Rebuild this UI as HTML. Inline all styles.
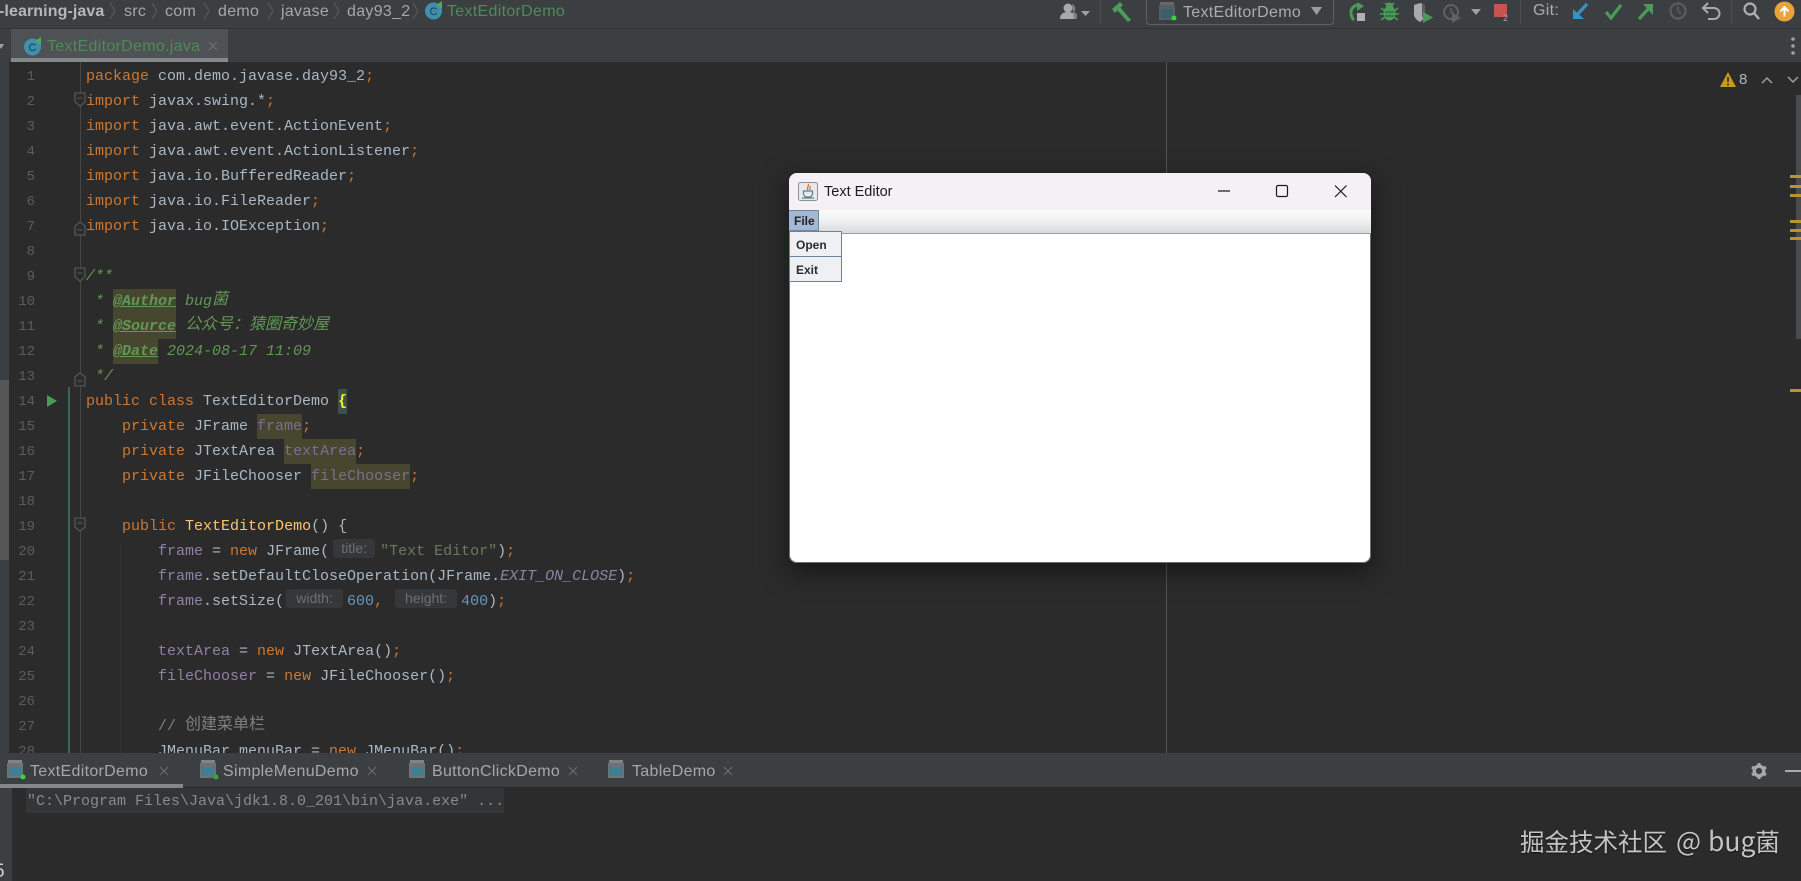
<!DOCTYPE html>
<html lang="en">
<head>
<meta charset="utf-8">
<title>TextEditorDemo</title>
<style>
html,body{margin:0;padding:0;background:#2b2b2b}
#root{position:relative;width:1801px;height:881px;overflow:hidden;background:#2b2b2b;font-family:"Liberation Sans","Noto Sans CJK SC",sans-serif;filter:blur(.35px)}
.a{position:absolute}
.t{position:absolute;white-space:pre;font-size:16px;letter-spacing:.3px;line-height:22px;color:#a4a8aa}
.gr{color:#4f8a5a}
svg{position:absolute;overflow:visible}
#code{position:absolute;left:86px;top:64px;font-family:"Liberation Mono","Noto Sans CJK SC",monospace;font-size:15px;color:#a9b7c6}
.l{height:25px;line-height:25px;white-space:pre;position:relative}
.k{color:#cc7832}.f{color:#9080a6}.s{color:#687a5c}.n{color:#6897bb}.m{color:#ffc66d}
.c{color:#808080}.d{color:#629755;font-style:italic}
.tag{color:#629755;font-weight:bold;text-decoration:underline;background:#47472f;font-style:italic;display:inline-block;height:25px;vertical-align:top}
.hl{background:#47472f;color:#7f6c92;display:inline-block;height:25px;vertical-align:top}
.zh{font-size:16px;font-family:"Noto Sans CJK SC",sans-serif;line-height:0;position:relative;top:-1px}
.h{display:inline-block;box-sizing:border-box;height:19px;background:#363738;color:#6e6f70;border-radius:3px;font:14px/18px "Liberation Sans",sans-serif;text-align:center;vertical-align:2px}
.ln{position:absolute;left:10px;width:25px;text-align:right;font-family:"Liberation Mono",monospace;font-size:14px;line-height:25px;color:#5a5d60}
.st{position:absolute;left:1790px;width:11px;height:3px;background:#b5952f}
</style>
</head>
<body>
<div id="root">
  <!-- top toolbar -->
  <div class="a" style="left:0;top:0;width:1801px;height:28px;background:#3c3f41"></div>
  <div class="a" style="left:0;top:28px;width:1801px;height:1px;background:#323232"></div>
  <span class="t" style="left:-1px;top:1px;font-weight:bold;color:#b4b8ba;letter-spacing:.1px">-learning-java</span>
  <span class="t" style="left:124px;top:1px">src</span>
  <span class="t" style="left:165px;top:1px">com</span>
  <span class="t" style="left:218px;top:1px">demo</span>
  <span class="t" style="left:281px;top:1px">javase</span>
  <span class="t" style="left:347px;top:1px">day93_2</span>
  <span class="t gr" style="left:447px;top:1px">TextEditorDemo</span>
  <svg width="440" height="28" style="left:0;top:0" fill="none" stroke="#55585a" stroke-width="1.2">
    <path d="M110 3l5 8-5 8M152 3l5 8-5 8M204 3l5 8-5 8M268 3l5 8-5 8M334 3l5 8-5 8M413 3l5 8-5 8"/>
  </svg>
  <svg width="20" height="20" viewBox="0 0 20 20" style="left:424px;top:0">
    <circle cx="9.5" cy="11" r="8.5" fill="#3f8fae"/><text x="9.5" y="15" font-size="11" text-anchor="middle" fill="#1d3a48" font-family="Liberation Sans">C</text>
    <path d="M12 5l6-4v8z" fill="#4fa95c"/>
  </svg>

  <!-- toolbar icons -->
  <svg width="40" height="24" style="left:1058px;top:1px">
    <circle cx="10" cy="7" r="4.5" fill="#a9a9a9"/><path d="M2 18c0-5 3-7 8-7s8 2 8 7z" fill="#a9a9a9"/><path d="M14 3a5 5 0 0 1 2 8l3 2v5h-3" fill="#7d7d7d"/>
    <path d="M23 10h9l-4.500 5z" fill="#a0a0a0"/>
  </svg>
  <div class="a" style="left:1100px;top:0;width:1px;height:24px;background:#4c4f51"></div>
  <svg width="24" height="22" style="left:1111px;top:1px">
    <path d="M1 8L9 1l3 3-8 8z" fill="#4f9a5a"/><path d="M9 6l11 13-3 2L6 9z" fill="#4f9a5a"/>
  </svg>
  <div class="a" style="left:1146px;top:-4px;width:186px;height:27px;border:1px solid #5e6163;border-radius:4px"></div>
  <svg width="20" height="22" style="left:1158px;top:1px">
    <rect x="2" y="1" width="14" height="3" fill="#666a6c"/><rect x="1" y="4" width="16" height="15" fill="#585d60"/><rect x="3" y="8" width="12" height="9" fill="#375f6e"/><circle cx="16" cy="17" r="2.500" fill="#2fdc2f"/>
  </svg>
  <span class="t" style="left:1183px;top:2px;color:#a9adaf">TextEditorDemo</span>
  <svg width="12" height="10" style="left:1311px;top:7px"><path d="M0 0h11L5.500 8z" fill="#9d9d9d"/></svg>

  <svg width="22" height="24" style="left:1348px;top:2px">
    <path d="M11 3A7.500 7.500 0 0 0 3 11c0 3 1 5 3 7" fill="none" stroke="#4b9b58" stroke-width="3"/><path d="M9 0l7 4-7 5z" fill="#4b9b58"/><rect x="9" y="11" width="8" height="8" fill="#b0b0b0"/>
  </svg>
  <svg width="20" height="22" style="left:1380px;top:2px">
    <ellipse cx="9.500" cy="11" rx="6" ry="7.500" fill="#4b9b58"/><circle cx="9.500" cy="4" r="3.500" fill="#4b9b58"/><path d="M1 6l4 3M18 6l-4 3M0 12h4M19 12h-4M1 18l4-3M18 18l-4-3M5 1l2 2M14 1l-2 2" stroke="#4b9b58" stroke-width="1.600"/><path d="M5 10h9M5 14h9" stroke="#2f5f38" stroke-width="1.300"/>
  </svg>
  <svg width="22" height="24" style="left:1413px;top:2px">
    <path d="M1 3l6-2 5 2v9c0 3-2 6-5 8-4-2-6-5-6-8z" fill="#a9a9a9"/><path d="M9 1l3 2v12H9z" fill="#5b5e60"/><path d="M10 10l10 5.500-10 5.500z" fill="#4b9b58"/>
  </svg>
  <svg width="22" height="24" style="left:1442px;top:2px">
    <circle cx="9" cy="10" r="7" fill="none" stroke="#5f6265" stroke-width="2"/><path d="M9 6v4l3 2" stroke="#5f6265" stroke-width="1.500" fill="none"/><path d="M10 11l9 5-9 5z" fill="#5f6265"/>
  </svg>
  <svg width="12" height="10" style="left:1471px;top:9px"><path d="M0 0h10L5 6z" fill="#a0a0a0"/></svg>
  <div class="a" style="left:1494px;top:4px;width:13px;height:13px;background:#c75450"></div>
  <span class="a" style="left:1503px;top:13px;font-size:9px;line-height:10px;color:#a0a0a0">2</span>
  <div class="a" style="left:1520px;top:0;width:1px;height:24px;background:#4c4f51"></div>
  <span class="t" style="left:1533px;top:0;color:#a9adaf">Git:</span>
  <svg width="24" height="24" style="left:1571px;top:2px">
    <path d="M16 2L5 14" stroke="#3592c4" stroke-width="3.200"/><path d="M2 7v10h11z" fill="#3592c4"/>
  </svg>
  <svg width="24" height="24" style="left:1604px;top:2px">
    <path d="M2 10l5 6L17 3" fill="none" stroke="#4b9b58" stroke-width="3.200"/>
  </svg>
  <svg width="24" height="24" style="left:1637px;top:2px">
    <path d="M2 17L13 5" stroke="#4b9b58" stroke-width="3.200"/><path d="M6 2h10v11z" fill="#4b9b58"/>
  </svg>
  <svg width="22" height="22" style="left:1669px;top:2px">
    <circle cx="9" cy="9" r="7.500" fill="none" stroke="#5a5d60" stroke-width="2.200"/><path d="M9 4v5l3 3" fill="none" stroke="#5a5d60" stroke-width="1.500"/>
  </svg>
  <svg width="22" height="22" style="left:1702px;top:2px">
    <path d="M2 6h10a5.500 5.500 0 0 1 0 11H6" fill="none" stroke="#a9a9a9" stroke-width="2"/><path d="M6 1L1 6l5 5" fill="none" stroke="#a9a9a9" stroke-width="2"/>
  </svg>
  <div class="a" style="left:1731px;top:0;width:1px;height:24px;background:#4c4f51"></div>
  <svg width="22" height="22" style="left:1743px;top:2px">
    <circle cx="7" cy="7" r="5.500" fill="none" stroke="#b0b0b0" stroke-width="2.200"/><path d="M11 11l5 6" stroke="#b0b0b0" stroke-width="2.500"/>
  </svg>
  <svg width="22" height="22" style="left:1774px;top:1px">
    <circle cx="10.500" cy="10.500" r="10" fill="#e8a33a"/><path d="M10.500 15.500V7M6.500 10.500l4-4.500 4 4.500" fill="none" stroke="#fff" stroke-width="2"/>
  </svg>

  <!-- tab bar -->
  <div class="a" style="left:0;top:29px;width:1801px;height:33px;background:#3c3f41"></div>
  <div class="a" style="left:11px;top:29px;width:217px;height:29px;background:#4e5254"></div>
  <div class="a" style="left:11px;top:58px;width:217px;height:4px;background:#85888a"></div>
  <svg width="8" height="6" style="left:0;top:44px"><path d="M-2 0h6L1 5z" fill="#a0a0a0"/></svg>
  <svg width="20" height="20" viewBox="0 0 20 20" style="left:23px;top:36px">
    <circle cx="9.500" cy="11" r="8.500" fill="#3f8fae"/><text x="9.500" y="15" font-size="11" text-anchor="middle" fill="#1d3a48" font-family="Liberation Sans">C</text>
    <path d="M12 5l6-4v8z" fill="#4fa95c"/>
  </svg>
  <span class="t gr" style="left:47px;top:36px">TextEditorDemo.java</span>
  <svg width="10" height="10" style="left:209px;top:42px"><path d="M0 0l8 8M8 0L0 8" stroke="#6d7072" stroke-width="1.200"/></svg>
  <svg width="6" height="20" style="left:1790px;top:37px"><circle cx="3" cy="2" r="1.800" fill="#a0a0a0"/><circle cx="3" cy="9" r="1.800" fill="#a0a0a0"/><circle cx="3" cy="16" r="1.800" fill="#a0a0a0"/></svg>

  <!-- editor -->
  <div class="a" style="left:0;top:62px;width:1801px;height:691px;overflow:hidden;background:#2b2b2b"></div>
  <div class="a" style="left:0;top:62px;width:9px;height:691px;background:#3c3f41"></div>
  <div class="a" style="left:0;top:380px;width:9px;height:180px;background:#545658"></div>
  <div class="a" style="left:1166px;top:62px;width:1px;height:691px;background:#555"></div>
  <div class="a" style="left:80px;top:62px;width:1px;height:691px;background:#444647"></div>
  <div class="a" style="left:68px;top:387px;width:1.500px;height:366px;background:#37665a"></div>
  <div class="a" style="left:120px;top:544px;width:1px;height:209px;background:#333536"></div>
  <svg width="10" height="12" style="left:47px;top:395px"><path d="M0 0l10 6-10 6z" fill="#499c54"/></svg>
  <svg width="14" height="330" style="left:74px;top:92px" fill="#2b2b2b" stroke="#5a5d5f" stroke-width="1.100">
    <path d="M1 1h10v9l-5 4-5-4z"/><path d="M3.500 6h5" stroke-width="1"/>
    <path d="M1 143V134l5-4 5 4v9z" /><path d="M3.500 138h5" stroke-width="1"/>
    <path d="M1 176h10v9l-5 4-5-4z"/><path d="M3.500 181h5" stroke-width="1"/>
    <path d="M1 294V285l5-4 5 4v9z"/><path d="M3.500 289h5" stroke-width="1"/>
  </svg>
  <svg width="14" height="20" style="left:74px;top:517px" fill="#2b2b2b" stroke="#5a5d5f" stroke-width="1.100"><path d="M1 1h10v9l-5 4-5-4z"/><path d="M3.500 6h5" stroke-width="1"/></svg>

  <div class="a" style="left:0;top:65px;width:40px;height:688px;overflow:hidden">
    <div class="ln" style="top:0">1</div><div class="ln" style="top:25px">2</div><div class="ln" style="top:50px">3</div><div class="ln" style="top:75px">4</div><div class="ln" style="top:100px">5</div><div class="ln" style="top:125px">6</div><div class="ln" style="top:150px">7</div><div class="ln" style="top:175px">8</div><div class="ln" style="top:200px">9</div><div class="ln" style="top:225px">10</div><div class="ln" style="top:250px">11</div><div class="ln" style="top:275px">12</div><div class="ln" style="top:300px">13</div><div class="ln" style="top:325px">14</div><div class="ln" style="top:350px">15</div><div class="ln" style="top:375px">16</div><div class="ln" style="top:400px">17</div><div class="ln" style="top:425px">18</div><div class="ln" style="top:450px">19</div><div class="ln" style="top:475px">20</div><div class="ln" style="top:500px">21</div><div class="ln" style="top:525px">22</div><div class="ln" style="top:550px">23</div><div class="ln" style="top:575px">24</div><div class="ln" style="top:600px">25</div><div class="ln" style="top:625px">26</div><div class="ln" style="top:650px">27</div><div class="ln" style="top:675px">28</div>
  </div>

  <div class="a" style="left:0;top:64px;width:1160px;height:689px;overflow:hidden">
  <div id="code" style="top:0">
<div class="l"><span class="k">package</span> com.demo.javase.day93_2<span class="k">;</span></div>
<div class="l"><span class="k">import</span> javax.swing.*<span class="k">;</span></div>
<div class="l"><span class="k">import</span> java.awt.event.ActionEvent<span class="k">;</span></div>
<div class="l"><span class="k">import</span> java.awt.event.ActionListener<span class="k">;</span></div>
<div class="l"><span class="k">import</span> java.io.BufferedReader<span class="k">;</span></div>
<div class="l"><span class="k">import</span> java.io.FileReader<span class="k">;</span></div>
<div class="l"><span class="k">import</span> java.io.IOException<span class="k">;</span></div>
<div class="l"> </div>
<div class="l"><span class="d">/**</span></div>
<div class="l"><span class="d"> * </span><span class="tag">@Author</span><span class="d"> bug<span class="zh">菌</span></span></div>
<div class="l"><span class="d"> * </span><span class="tag">@Source</span><span class="d"> <span class="zh">公众号：猿圈奇妙屋</span></span></div>
<div class="l"><span class="d"> * </span><span class="tag">@Date</span><span class="d"> 2024-08-17 11:09</span></div>
<div class="l"><span class="d"> */</span></div>
<div class="l"><span class="k">public class</span> TextEditorDemo <span style="display:inline-block;height:25px;vertical-align:top;background:#3b514d;color:#ffef28;font-weight:bold">{</span></div>
<div class="l">    <span class="k">private</span> JFrame <span class="hl">frame</span><span class="k">;</span></div>
<div class="l">    <span class="k">private</span> JTextArea <span class="hl">textArea</span><span class="k">;</span></div>
<div class="l">    <span class="k">private</span> JFileChooser <span class="hl">fileChooser</span><span class="k">;</span></div>
<div class="l"> </div>
<div class="l">    <span class="k">public</span> <span class="m">TextEditorDemo</span>() {</div>
<div class="l">        <span class="f">frame</span> = <span class="k">new</span> JFrame(<span class="h" style="width:42px;margin:0 5px 0 4px">title:</span><span class="s">"Text Editor"</span>)<span class="k">;</span></div>
<div class="l">        <span class="f">frame</span>.setDefaultCloseOperation(JFrame.<span class="f" style="font-style:italic">EXIT_ON_CLOSE</span>)<span class="k">;</span></div>
<div class="l">        <span class="f">frame</span>.setSize(<span class="h" style="width:57px;margin:0 4px 0 2px">width:</span><span class="n">600</span><span class="k">,</span><span class="h" style="width:62px;margin:0 4px 0 12px">height:</span><span class="n">400</span>)<span class="k">;</span></div>
<div class="l"> </div>
<div class="l">        <span class="f">textArea</span> = <span class="k">new</span> JTextArea()<span class="k">;</span></div>
<div class="l">        <span class="f">fileChooser</span> = <span class="k">new</span> JFileChooser()<span class="k">;</span></div>
<div class="l"> </div>
<div class="l">        <span class="c">// <span class="zh">创建菜单栏</span></span></div>
<div class="l">        JMenuBar menuBar = <span class="k">new</span> JMenuBar()<span class="k">;</span></div>
  </div>
  </div>

  <!-- right inspection -->
  <svg width="18" height="16" style="left:1720px;top:72px"><path d="M8 0l8 15H0z" fill="#c69a22"/><path d="M8 5v5M8 11.500v2" stroke="#2b2b2b" stroke-width="1.600"/></svg>
  <span class="a" style="left:1739px;top:71px;font-size:15px;line-height:18px;color:#a9b7c6">8</span>
  <svg width="12" height="8" style="left:1761px;top:76px"><path d="M1 7l5-5 5 5" fill="none" stroke="#a0a0a0" stroke-width="1.500"/></svg>
  <svg width="12" height="8" style="left:1787px;top:76px"><path d="M1 1l5 5 5-5" fill="none" stroke="#a0a0a0" stroke-width="1.500"/></svg>
  <div class="a" style="left:1796px;top:95px;width:5px;height:244px;background:#4a4b4c"></div>
  <div class="st" style="top:175px"></div><div class="st" style="top:185px"></div><div class="st" style="top:194px"></div><div class="st" style="top:220px"></div><div class="st" style="top:229px"></div><div class="st" style="top:237px"></div><div class="st" style="top:389px"></div>

  <!-- swing window -->
  <div class="a" style="left:789px;top:173px;width:582px;height:390px;background:#fff;border-radius:8px;box-shadow:0 8px 26px rgba(0,0,0,.5);overflow:hidden;outline:1px solid #6d6d6d;outline-offset:-1px">
    <div class="a" style="left:0;top:0;width:582px;height:37px;background:#f5f0f3"></div>
    <div class="a" style="left:0;top:37px;width:582px;height:23px;background:linear-gradient(#fbfbfb,#f0f1f2 45%,#d8dbdd)"></div>
    <div class="a" style="left:0;top:60px;width:582px;height:1px;background:#9a9da0"></div>
    <div class="a" style="left:0;top:37px;width:30px;height:21px;box-sizing:border-box;background:#a3b8d3;border:1px solid #7088a5;border-left:0"></div>
    <span class="a" style="left:5px;top:40px;font:bold 12px/16px 'Liberation Sans',sans-serif;color:#222">File</span>
    <svg width="20" height="20" style="left:9px;top:9px">
      <rect x=".5" y=".5" width="19" height="18" rx="2" fill="#e6e8ea" stroke="#8d9296"/>
      <path d="M10 2c2 2-2 3 0 6M12 4c1 1-1 2 0 4" fill="none" stroke="#d9702a" stroke-width="1.200"/>
      <path d="M5.500 9h9v3a3.500 3.500 0 0 1-3.500 3H9a3.500 3.500 0 0 1-3.500-3zM4 16h12" fill="none" stroke="#5b7d96" stroke-width="1.200"/>
    </svg>
    <span class="a" style="left:35px;top:9px;font-size:14.500px;line-height:20px;color:#1c1c1c">Text Editor</span>
    <svg width="150" height="16" style="left:428px;top:12px" fill="none" stroke="#1a1a1a" stroke-width="1.200">
      <path d="M1 6h12"/><rect x="59.500" y=".5" width="11" height="11" rx="1.500"/><path d="M118 .5l11.500 11.500M129.500 .5L118 12"/>
    </svg>
    <div class="a" style="left:0;top:58px;width:53px;height:51px;box-sizing:border-box;background:#eef0f4;border:1px solid #6d84a0"></div>
    <div class="a" style="left:0;top:83px;width:53px;height:1px;background:#6d84a0"></div>
    <span class="a" style="left:7px;top:61px;font:bold 12px/22px 'Liberation Sans',sans-serif;color:#2b2b2b">Open</span>
    <span class="a" style="left:7px;top:86px;font:bold 12px/22px 'Liberation Sans',sans-serif;color:#2b2b2b">Exit</span>
  </div>

  <!-- bottom panel -->
  <div class="a" style="left:0;top:753px;width:1801px;height:34px;background:#3c3f41"></div>
  <div class="a" style="left:0;top:784px;width:183px;height:4px;background:#85888a"></div>
  <div class="a" style="left:0;top:788px;width:1801px;height:93px;background:#2b2b2b"></div>
  <div class="a" style="left:0;top:788px;width:12px;height:93px;background:#3c3f41"></div>
  <div class="a" style="left:26px;top:788px;width:478px;height:25px;background:#343536"></div>
  <span class="a" style="left:27px;top:789px;font:15px/25px 'Liberation Mono',monospace;color:#8a8a8a;white-space:pre">"C:\Program Files\Java\jdk1.8.0_201\bin\java.exe" ...</span>
  <span class="a" style="left:-6px;top:861px;font-size:19px;line-height:22px;color:#cfcfcf">5</span>

  <svg width="20" height="22" style="left:6px;top:759px"><rect x="2" y="1" width="14" height="3" fill="#7f8486"/><rect x="1" y="4" width="16" height="15" fill="#6c7275"/><rect x="3" y="8" width="12" height="9" fill="#3f7f94"/><circle cx="17" cy="18" r="2.500" fill="#2fdc2f"/></svg>
  <span class="t" style="left:30px;top:761px">TextEditorDemo</span>
  <svg width="10" height="10" style="left:160px;top:767px"><path d="M0 0l8 8M8 0L0 8" stroke="#6d7072"/></svg>
  <svg width="20" height="22" style="left:199px;top:759px"><rect x="2" y="1" width="14" height="3" fill="#7f8486"/><rect x="1" y="4" width="16" height="15" fill="#6c7275"/><rect x="3" y="8" width="12" height="9" fill="#3f7f94"/><circle cx="17" cy="18" r="2.500" fill="#3aa53a"/></svg>
  <span class="t" style="left:223px;top:761px">SimpleMenuDemo</span>
  <svg width="10" height="10" style="left:368px;top:767px"><path d="M0 0l8 8M8 0L0 8" stroke="#6d7072"/></svg>
  <svg width="20" height="22" style="left:408px;top:759px"><rect x="2" y="1" width="14" height="3" fill="#7f8486"/><rect x="1" y="4" width="16" height="15" fill="#6c7275"/><rect x="3" y="8" width="12" height="9" fill="#3f7f94"/></svg>
  <span class="t" style="left:432px;top:761px">ButtonClickDemo</span>
  <svg width="10" height="10" style="left:569px;top:767px"><path d="M0 0l8 8M8 0L0 8" stroke="#6d7072"/></svg>
  <svg width="20" height="22" style="left:607px;top:759px"><rect x="2" y="1" width="14" height="3" fill="#7f8486"/><rect x="1" y="4" width="16" height="15" fill="#6c7275"/><rect x="3" y="8" width="12" height="9" fill="#3f7f94"/></svg>
  <span class="t" style="left:632px;top:761px">TableDemo</span>
  <svg width="10" height="10" style="left:724px;top:767px"><path d="M0 0l8 8M8 0L0 8" stroke="#6d7072"/></svg>

  <svg width="18" height="18" viewBox="0 0 18 18" style="left:1750px;top:762px">
    <circle cx="9" cy="9" r="4.800" fill="none" stroke="#a9a9a9" stroke-width="3.400"/>
    <path d="M9 1v4M9 13v4M2 5l3 2M13 11l3 2M2 13l3-2M13 7l3-2" stroke="#a9a9a9" stroke-width="3"/>
  </svg>
  <div class="a" style="left:1785px;top:770px;width:16px;height:2px;background:#a9a9a9"></div>

  <span class="a" style="left:1520px;top:823px;font-family:'Noto Sans CJK SC',sans-serif;font-size:24.500px;line-height:34px;color:#c4c4c4;white-space:pre;text-shadow:0 1px 1px rgba(0,0,0,.6)">掘金技术社区<span style="font-size:26.500px;margin-left:9px;word-spacing:1px">@ bug</span>菌</span>
</div>
</body>
</html>
